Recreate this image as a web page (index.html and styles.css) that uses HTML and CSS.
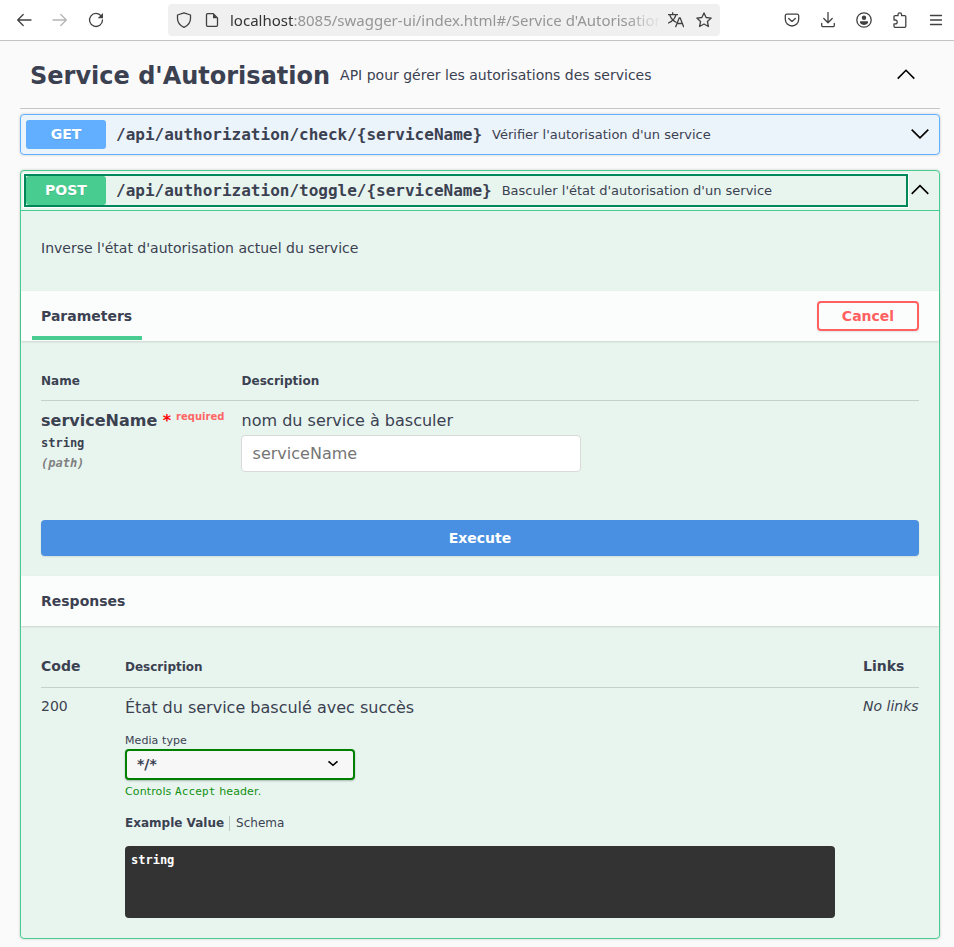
FILE: index.html
```html
<!DOCTYPE html>
<html lang="fr">
<head>
<meta charset="utf-8">
<title>Swagger UI</title>
<link rel="stylesheet" href="styles.css">
</head>
<body>
<header class="toolbar">
  <svg class="ico back" viewBox="0 0 16 16"><path d="M15 8H1.8M7.2 2.5L1.7 8l5.500 5.500"/></svg>
  <svg class="ico forward" viewBox="0 0 16 16"><path d="M1 8h13.200M8.800 2.500L14.300 8l-5.500 5.500"/></svg>
  <svg class="ico reload" viewBox="0 0 16 16"><path d="M13.300 4.200A6.500 6.500 0 1 0 14.500 8"/><path class="solid" d="M15 1v5.300h-5.300z"/></svg>
  <div class="urlbar">
    <svg class="ico" viewBox="0 0 16 16"><path d="M8 .8L14.500 3v3.500c0 4-2.400 7-6.500 8.800C3.900 13.500 1.500 10.500 1.500 6.500V3z"/></svg>
    <svg class="ico page" viewBox="0 0 16 16"><path d="M3.500 1.700h5.800l4.200 4.200v7.400a1 1 0 0 1-1 1h-9a1 1 0 0 1-1-1V2.700a1 1 0 0 1 1-1z"/><path class="solid" d="M9 1.700v4.500h4.500z"/></svg>
    <div class="url"><b>localhost</b>:8085/swagger-ui/index.html#/Service d'Autorisation</div>
    <svg class="ico translate" viewBox="0 0 16 16"><path d="M0 2.700h9.500M4.700.7v2M2 3.500c1 3 3.200 5.200 6 6.700M7.700 3.500C6.700 6.700 4 9.500.4 11M7.700 14.700l3.600-8.900h.8l3.500 8.900M9 11.500h5.500"/></svg>
    <svg class="ico star" viewBox="0 0 16 16"><path d="M8 .9l2.100 4.600 5.100.6-3.800 3.400 1 5L8 12l-4.400 2.500 1-5L.8 6.100l5.100-.6z"/></svg>
  </div>
  <div class="tools">
    <svg class="ico" viewBox="0 0 16 16"><path d="M2.800 2.200h10.400a1.500 1.500 0 0 1 1.500 1.500V7.300a6.700 6.700 0 0 1-13.400 0V3.700a1.500 1.500 0 0 1 1.500-1.500zM4.700 6.400L8 9.400l3.300-3"/></svg>
    <svg class="ico" viewBox="0 0 16 16"><path d="M8 .5v10M3.800 6.500L8 10.700l4.200-4.200M1.700 11.500v2a1.200 1.200 0 0 0 1.200 1.200h10.200a1.200 1.200 0 0 0 1.200-1.200v-2"/></svg>
    <svg class="ico" viewBox="0 0 16 16"><circle cx="8" cy="8" r="7.200"/><circle class="solid" cx="8" cy="5.700" r="2.200"/><path class="solid" d="M4.500 9.300h7c.8 0 .8 1.200.2 2-1.900 2.200-5.500 2.200-7.400 0-.6-.8-.6-2 .2-2z"/></svg>
    <svg class="ico" viewBox="0 0 16 16"><path d="M2 7V4.700a1 1 0 0 1 1-1h3V2.600c0-2.400 3.600-2.400 3.600 0v1.100h3.200a1 1 0 0 1 1 1v9.600a1 1 0 0 1-1 1H3a1 1 0 0 1-1-1v-2.500h1.300c2.600 0 2.600-3.800 0-3.800H2"/></svg>
    <svg class="ico" viewBox="0 0 16 16"><path d="M2.500 3.500h11M2.500 8h11M2.500 12.500h11"/></svg>
  </div>
</header>

<main>
  <div class="tag">
    <h1>Service d'Autorisation</h1>
    <p>API pour gérer les autorisations des services</p>
    <svg class="chevron" viewBox="0 0 20 20"><path d="M1.700 13.600L10 5.300l8.300 8.300"/></svg>
  </div>

  <section class="op get">
    <div class="summary">
      <div class="control">
        <span class="method">GET</span>
        <span class="path">/api/authorization/check/{serviceName}</span>
        <span class="note">Vérifier l'autorisation d'un service</span>
      </div>
      <svg class="chevron" viewBox="0 0 20 20"><path d="M1.700 4.600L10 12.900l8.300-8.300"/></svg>
    </div>
  </section>

  <section class="op post">
    <div class="summary">
      <div class="control focused">
        <span class="method">POST</span>
        <span class="path">/api/authorization/toggle/{serviceName}</span>
        <span class="note">Basculer l'état d'autorisation d'un service</span>
      </div>
      <svg class="chevron" viewBox="0 0 20 20"><path d="M1.700 12.900L10 4.600l8.300 8.300"/></svg>
    </div>
    <div class="about">Inverse l'état d'autorisation actuel du service</div>
    <div class="bar">
      <div class="tab">Parameters</div>
      <button class="cancel">Cancel</button>
    </div>
    <div class="params">
      <div class="row head"><span>Name</span><span class="pcol">Description</span></div>
      <div class="row">
        <div>
          <div class="name">serviceName<span class="asterisk">*</span><span class="required">required</span></div>
          <div class="type">string</div>
          <div class="in">(path)</div>
        </div>
        <div>
          <div class="pdesc pcol">nom du service à basculer</div>
          <input type="text" placeholder="serviceName">
        </div>
      </div>
    </div>
    <div class="run"><button class="execute">Execute</button></div>
    <div class="bar responses-bar">Responses</div>
    <div class="responses">
      <div class="rrow rhead"><span>Code</span><span class="small">Description</span><span>Links</span></div>
      <div class="rrow">
        <span class="code">200</span>
        <div class="detail">
          <div class="rdesc">État du service basculé avec succès</div>
          <div class="label">Media type</div>
          <div class="select"><span>*/*</span><svg viewBox="0 0 20 20"><path d="M5.500 7.300l4.500 4 4.500-4"/></svg></div>
          <div class="hint">Controls <code>Accept</code> header.</div>
          <div class="views"><b>Example Value</b><span>Schema</span></div>
          <pre>string</pre>
        </div>
        <i class="nolinks">No links</i>
      </div>
    </div>
  </section>
</main>
</body>
</html>
```
FILE: styles.css
```css
* { box-sizing: border-box; }
body {
  margin: 0;
  height: 947px;
  overflow: hidden;
  background: #fafafa;
  color: #3b4151;
  font-family: "DejaVu Sans", sans-serif;
  font-size: 14px;
}
button, input { font-family: inherit; }

.toolbar {
  height: 41px;
  display: flex;
  align-items: center;
  padding: 0 10px 1px 16px;
  background: #fff;
  border-bottom: 1px solid #c4c4c4;
}
.ico {
  width: 16px;
  height: 16px;
  flex: none;
  fill: none;
  stroke: #414141;
  stroke-width: 1.3;
  stroke-linejoin: round;
  stroke-linecap: round;
}
.ico .solid { fill: #414141; stroke: none; }
.forward { margin-left: 20px; stroke: #b5b5b5; }
.reload { margin-left: 20px; }
.urlbar {
  display: flex;
  align-items: center;
  width: 552px;
  height: 32px;
  margin-left: 64px;
  padding: 0 8px;
  border-radius: 4px;
  background: #f0f0f0;
}
.page { margin-left: 12px; }
.url {
  width: 430px;
  margin: 0 8px 0 10px;
  overflow: hidden;
  white-space: nowrap;
  font: 15px/22px "Noto Sans", sans-serif;
  color: #959595;
  -webkit-mask-image: linear-gradient(to right, #000 395px, transparent 432px);
  mask-image: linear-gradient(to right, #000 395px, transparent 432px);
}
.url b { font-weight: 400; color: #333; }
.star { margin-left: 12px; }
.tools { display: flex; gap: 20px; margin-left: 64px; }

main { padding: 0 14px 0 20px; width: 954px; }
.chevron { width: 20px; height: 20px; flex: none; fill: none; stroke: #000; stroke-width: 1.6; }
.tag {
  display: flex;
  align-items: center;
  width: 920px;
  height: 68px;
  padding: 0 24px 0 10px;
  border-bottom: 1px solid #c4c6ca;
}
.tag h1 { margin: 2px 0 0; font-size: 24px; line-height: 32px; white-space: nowrap; }
.tag p { margin: 0 auto 0 10px; }
.op {
  width: 920px;
  border: 1px solid;
  border-radius: 4px;
  box-shadow: 0 0 3px rgba(0, 0, 0, .19);
}
.get { height: 41px; margin-top: 5px; border-color: #61affe; background: #ebf3fb; }
.post { height: 769px; margin-top: 15px; border-color: #49cc90; background: #e8f5ef; }
.summary { display: flex; align-items: center; height: 39px; padding: 0 9px 0 5px; }
.post .summary { height: 40px; border-bottom: 1px solid #49cc90; }
.control { display: flex; align-items: center; flex: 1; height: 29px; margin-right: 4px; white-space: nowrap; }
.focused { outline: 2px solid #00875a; box-shadow: 0 0 0 3px #fff; }
.method {
  width: 80px;
  height: 29px;
  border-radius: 3px;
  background: #61affe;
  color: #fff;
  font-weight: 700;
  line-height: 28px;
  text-align: center;
  text-shadow: 0 1px 0 rgba(0, 0, 0, .1);
}
.post .method { background: #49cc90; }
.path { margin-left: 10px; font: 700 16px/20px "DejaVu Sans Mono", monospace; }
.note { margin-left: 10px; font-size: 13px; }
.about { height: 80px; padding: 28px 20px 0; line-height: 18px; }
.bar {
  display: flex;
  align-items: center;
  justify-content: space-between;
  height: 50px;
  padding: 0 20px 0 11px;
  background: #fbfdfc;
  box-shadow: 0 1px 2px rgba(0, 0, 0, .13);
  font-weight: 700;
}
.tab { align-self: flex-start; height: 49px; width: 110px; padding-left: 9px; line-height: 50px; border-bottom: 4px solid #49cc90; }
.cancel {
  width: 102px;
  height: 30px;
  border: 2px solid #ff6060;
  border-radius: 4px;
  background: transparent;
  box-shadow: 0 1px 2px rgba(0, 0, 0, .1);
  color: #ff6060;
  font-size: 14px;
  font-weight: 700;
}
.params { height: 179px; padding: 20px 20px 0; }
.row { display: grid; grid-template-columns: 200px 1fr; }
.head { height: 40px; line-height: 40px; font-size: 12px; font-weight: 700; border-bottom: 1px solid #c3d0cc; }
.pcol { padding-left: .6px; }
.name { display: flex; margin-top: 9px; font-size: 16px; font-weight: 700; line-height: 22px; }
.asterisk { margin: 0 5px 0 5.500px; color: #f00; }
.required { font-size: 10px; line-height: 13px; color: #f66; }
.type { font: 700 12px/20px "DejaVu Sans Mono", monospace; margin-top: 1px; }
.in { font: italic 700 12px/20px "DejaVu Sans Mono", monospace; color: #808080; }
.pdesc { margin-top: 9px; font-size: 16px; line-height: 22px; }
input {
  display: block;
  width: 340px;
  height: 37px;
  margin-top: 3px;
  padding: 0 10.600px;
  border: 1px solid #d9d9d9;
  border-radius: 4px;
  background: #fff;
  font-size: 16px;
}
input::placeholder { color: #757575; }
.run { height: 56px; padding: 0 20px; }
.execute {
  width: 100%;
  height: 36px;
  border: 0;
  border-radius: 4px;
  background: #4990e2;
  box-shadow: 0 1px 2px rgba(0, 0, 0, .1);
  color: #fff;
  font-size: 14px;
  font-weight: 700;
}
.responses-bar { padding-left: 20px; }
.responses { padding: 20px 20px 0; }
.rrow { display: grid; grid-template-columns: 84px 738px 1fr; }
.rhead { height: 42px; line-height: 41px; font-weight: 700; border-bottom: 1px solid #c3d0cc; }
.small { font-size: 12px; line-height: 42px; }
.code, .nolinks { margin-top: 9px; line-height: 18px; white-space: nowrap; }
.detail { width: 710px; }
.rdesc { margin-top: 9px; font-size: 16px; line-height: 22px; }
.label { margin-top: 15px; font-size: 11px; line-height: 14px; letter-spacing: .08px; }
.select {
  display: flex;
  align-items: center;
  justify-content: space-between;
  width: 230px;
  height: 31px;
  margin-top: 1px;
  padding: 0 10px 1px;
  border: 2px solid green;
  border-radius: 4px;
  background: #f7f7f7;
  box-shadow: 0 1px 2px rgba(0, 0, 0, .25);
  font-weight: 700;
}
.select svg { width: 20px; height: 20px; fill: none; stroke: #000; stroke-width: 1.6; }
.hint { margin-top: 5px; font-size: 11px; line-height: 14px; letter-spacing: .12px; color: #129012; }
.hint code { font-family: "DejaVu Sans Mono", monospace; font-size: 11px; }
.views { display: flex; margin-top: 17px; font-size: 12px; line-height: 15px; }
.views span { margin-left: 5px; padding-left: 6px; border-left: 1px solid #bac8c2; }
pre {
  height: 72px;
  margin: 15px 0 0;
  padding: 6px;
  border-radius: 4px;
  background: #333;
  color: #fff;
  font: 700 12px/16px "DejaVu Sans Mono", monospace;
}
```
